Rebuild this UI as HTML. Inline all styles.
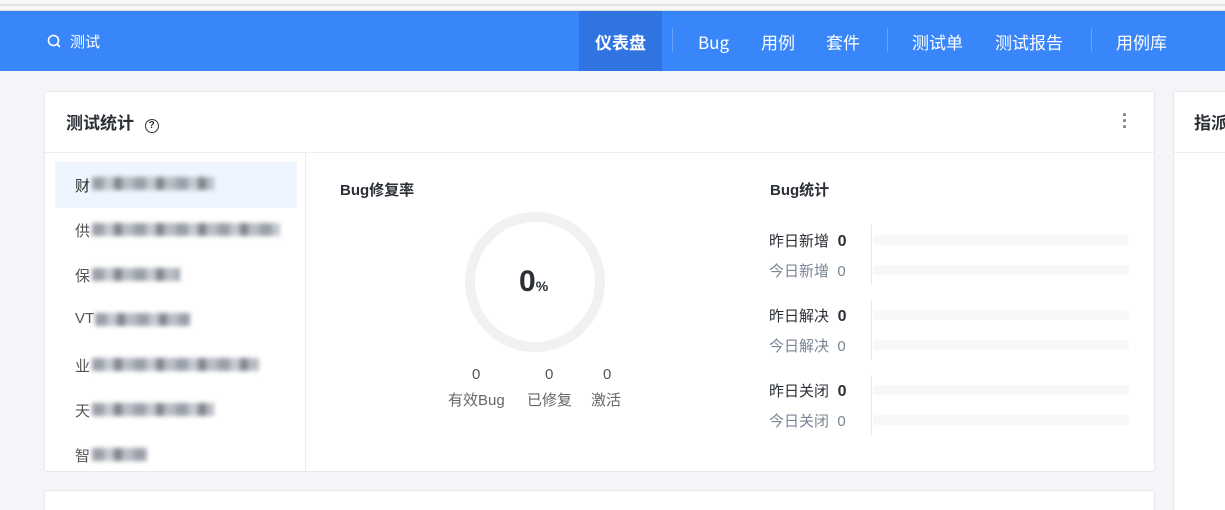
<!DOCTYPE html><html><head><meta charset="utf-8"><style>
*{margin:0;padding:0;box-sizing:border-box}
html,body{width:1225px;height:510px;overflow:hidden}
body{background:#f3f5f8;font-family:"Liberation Sans","Noto Sans CJK SC",sans-serif;position:relative;color:#2b2f36}
.top{position:absolute;left:0;top:0;width:1225px;height:11px;background:#f7f7f7;border-bottom:1px solid #ddd}
.top:before{content:"";position:absolute;left:0;top:4px;width:100%;height:2px;background:#e2e2e2}
.nav{position:absolute;left:0;top:11px;width:1225px;height:60px;background:#3886fa;color:#fff}
.nav .s{position:absolute;left:70px;top:20px;font-size:15px}
.nav a{position:absolute;top:20px;font-size:17px;color:#fff;font-family:"Noto Sans CJK SC",sans-serif;line-height:22px}
.act{position:absolute;left:579px;top:0;width:83px;height:60px;background:#2f74e0}
.sep{position:absolute;top:17px;width:1px;height:24px;background:#6aa3fb}
.card{position:absolute;background:#fff;border:1px solid #e6e8ec;border-radius:3px}
.abs{position:absolute}
.blur{position:absolute;height:13px;filter:blur(2.5px);background:repeating-linear-gradient(90deg,#9aa0aa 0 12px,#c4c8cf 12px 22px,#80868f 22px 30px,#b8bcc3 30px 42px)}
.li{position:absolute;left:75px;font-size:15px;color:#555}
.bar{position:absolute;left:873px;width:256px;height:10px;background:#f7f8f9;border-radius:3px}
.lb{position:absolute;left:769px;font-size:15px}
.lb b{font-size:16px}
</style></head><body>
<div class="top"></div>
<div class="nav">
<svg class="abs" style="left:47px;top:23px" width="14" height="14" viewBox="0 0 14 14"><circle cx="6.5" cy="6.5" r="5" fill="none" stroke="#fff" stroke-width="1.6"/><path d="M10 10l3 3" stroke="#fff" stroke-width="1.6"/></svg>
<div class="s">测试</div>
<div class="act"></div>
<a style="left:595px;font-weight:bold">仪表盘</a>
<div class="sep" style="left:672px"></div>
<a style="left:698px">Bug</a><a style="left:761px">用例</a><a style="left:826px">套件</a>
<div class="sep" style="left:887px"></div>
<a style="left:912px">测试单</a><a style="left:995px">测试报告</a>
<div class="sep" style="left:1091px"></div>
<a style="left:1116px">用例库</a>
</div>
<div class="card" style="left:44px;top:91px;width:1111px;height:381px">
<div class="abs" style="left:21px;top:17px;font-size:17px;font-weight:bold">测试统计 <span style="display:inline-block;width:14px;height:14px;border:1.5px solid #333;border-radius:50%;font-size:10px;text-align:center;line-height:11px;margin-left:6px;vertical-align:1px">?</span></div>
<div class="abs" style="left:1077px;top:20px;color:#777;font-size:18px;line-height:6px;font-weight:bold">·<br>·<br>·</div>
<div class="abs" style="left:0;top:60px;width:1109px;height:1px;background:#eceef1"></div>
<div class="abs" style="left:260px;top:60px;width:1px;height:320px;background:#eceef1"></div>
<div class="abs" style="left:10px;top:70px;width:242px;height:46px;background:#eef5fe"></div>
</div>
<div class="li" style="top:175px;color:#222">财</div><div class="blur" style="left:92px;top:177px;width:122px"></div>
<div class="li" style="top:220px">供</div><div class="blur" style="left:92px;top:223px;width:188px"></div>
<div class="li" style="top:265px">保</div><div class="blur" style="left:92px;top:268px;width:88px"></div>
<div class="li" style="top:310px">VT</div><div class="blur" style="left:95px;top:313px;width:95px"></div>
<div class="li" style="top:355px">业</div><div class="blur" style="left:92px;top:358px;width:167px"></div>
<div class="li" style="top:400px">天</div><div class="blur" style="left:92px;top:403px;width:122px"></div>
<div class="li" style="top:445px">智</div><div class="blur" style="left:92px;top:448px;width:55px"></div>
<div class="abs" style="left:340px;top:179px;font-size:15px;font-weight:bold">Bug修复率</div>
<div class="abs" style="left:465px;top:212px;width:140px;height:140px;border:10px solid #f0f1f3;border-radius:50%"></div>
<div class="abs" style="left:519px;top:265px;font-size:30px;font-weight:bold">0<span style="font-size:14px">%</span></div>
<div class="abs" style="left:448px;top:366px;width:180px;font-size:15px;color:#555">
<span class="abs" style="left:24px">0</span><span class="abs" style="left:97px">0</span><span class="abs" style="left:155px">0</span>
<span class="abs" style="left:0;top:23px;color:#666;white-space:nowrap">有效Bug</span><span class="abs" style="left:79px;top:23px;color:#666;white-space:nowrap">已修复</span><span class="abs" style="left:143px;top:23px;color:#666">激活</span></div>
<div class="abs" style="left:770px;top:179px;font-size:15px;font-weight:bold">Bug统计</div>
<div class="abs" style="left:871px;top:225px;width:1px;height:60px;background:#e8e8e8"></div>
<div class="abs" style="left:871px;top:300px;width:1px;height:60px;background:#e8e8e8"></div>
<div class="abs" style="left:871px;top:375px;width:1px;height:60px;background:#e8e8e8"></div>
<div class="lb" style="top:230px">昨日新增 <b>&nbsp;0</b></div><div class="lb" style="top:260px;color:#7a8594">今日新增 &nbsp;0</div>
<div class="lb" style="top:305px">昨日解决 <b>&nbsp;0</b></div><div class="lb" style="top:335px;color:#7a8594">今日解决 &nbsp;0</div>
<div class="lb" style="top:380px">昨日关闭 <b>&nbsp;0</b></div><div class="lb" style="top:410px;color:#7a8594">今日关闭 &nbsp;0</div>
<div class="bar" style="top:235px"></div><div class="bar" style="top:265px"></div>
<div class="bar" style="top:310px"></div><div class="bar" style="top:340px"></div>
<div class="bar" style="top:385px"></div><div class="bar" style="top:415px"></div>
<div class="card" style="left:1173px;top:91px;width:80px;height:430px">
<div class="abs" style="left:20px;top:17px;font-size:17px;font-weight:bold;white-space:nowrap">指派</div>
<div class="abs" style="left:0;top:60px;width:80px;height:1px;background:#eceef1"></div></div>
<div class="card" style="left:44px;top:490px;width:1111px;height:40px"></div>
</body></html>
